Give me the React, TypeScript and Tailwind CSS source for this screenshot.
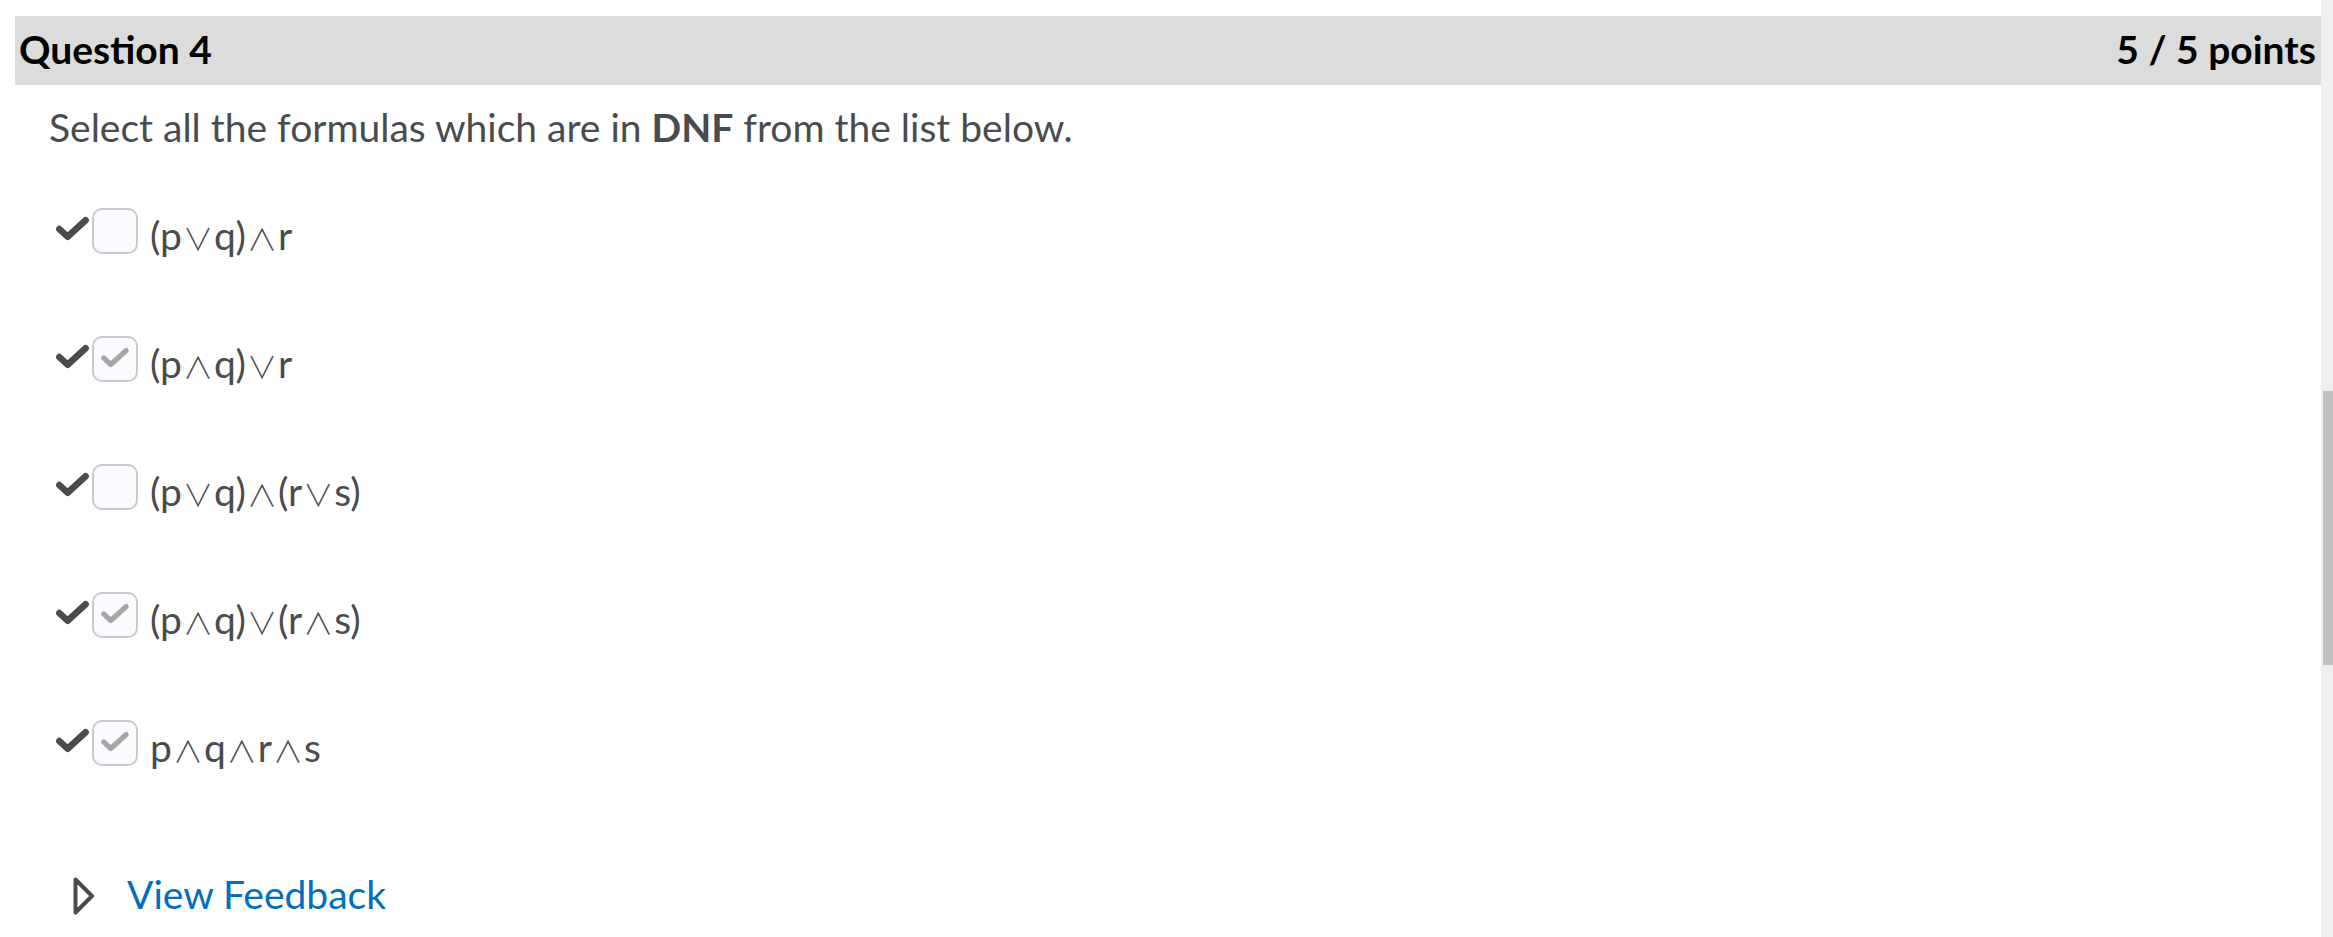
const options = [
  { parts: ["(p", "∨", "q)", "∧", "r"], checked: false },
  { parts: ["(p", "∧", "q)", "∨", "r"], checked: true },
  { parts: ["(p", "∨", "q)", "∧", "(r", "∨", "s)"], checked: false },
  { parts: ["(p", "∧", "q)", "∨", "(r", "∧", "s)"], checked: true },
  { parts: ["p", "∧", "q", "∧", "r", "∧", "s"], checked: true },
];

function Tick({ className, width }: { className?: string; width: number }) {
  return (
    <svg viewBox="0 0 32 24" className={className} fill="none">
      <path d="M4 12.5l7.5 7L28 4.5" stroke="currentColor" strokeWidth={width} strokeLinecap="round" strokeLinejoin="round" />
    </svg>
  );
}

function Option({ parts, checked }: { parts: string[]; checked: boolean }) {
  return (
    <div className="flex items-center h-[128px]">
      <Tick width={6} className="w-[35px] h-[27px] text-[#494c4e] mt-[-4px]" />
      <div className="ml-[2px] w-[46px] h-[46px] rounded-[10px] border-2 border-[#cacaca] bg-[#f9fbff] flex items-center justify-center">
        {checked && <Tick width={5.5} className="w-[30px] h-[23px] text-[#a6a6a6] mt-[-2px]" />}
      </div>
      <span className="ml-[12px] text-[39px] leading-none mt-[10px] flex items-baseline">
        {parts.map((p, i) =>
          i % 2 === 1 ? (
            <span key={i} className="font-['Noto_Sans_CJK_JP',sans-serif] font-light text-[30px] px-[1px]">
              {p}
            </span>
          ) : (
            <span key={i}>{p}</span>
          )
        )}
      </span>
    </div>
  );
}

export default function App() {
  return (
    <div className="flex w-[2333px] h-[937px] bg-white overflow-hidden font-['Lato','DejaVu_Sans',sans-serif] text-[#494c4e]">
      <div className="flex-1 flex flex-col pt-[16px] pl-[15px]">
        <div className="flex justify-between items-center h-[69px] bg-[#dcdcdc] pl-[4px] pr-[5px] pb-[3px] text-black font-bold text-[39px]">
          <h2>Question 4</h2>
          <span>5 / 5 points</span>
        </div>
        <div className="pl-[34px] pt-[15px]">
          <p className="text-[39px] leading-[1.4]">
            Select all the formulas which are in <b>DNF</b> from the list below.
          </p>
          <div className="flex flex-col mt-[12px] pl-[6px]">
            {options.map((o) => (
              <Option key={o.parts.join("")} {...o} />
            ))}
          </div>
          <div className="flex items-center mt-[58px] pl-[24px]">
            <svg viewBox="0 0 22 38" className="w-[22px] h-[38px] mt-[4px]" fill="none">
              <path d="M2.5 2.5L19 19L2.5 35.5Z" stroke="#494c4e" strokeWidth="4" strokeLinejoin="round" />
            </svg>
            <a className="ml-[32px] text-[39px] text-[#006fbf]">View Feedback</a>
          </div>
        </div>
      </div>
      <div className="w-[12px] bg-[#efefef] flex justify-end">
        <div className="w-[10px] h-[274px] mt-[391px] bg-[#c1c1c1]" />
      </div>
    </div>
  );
}
